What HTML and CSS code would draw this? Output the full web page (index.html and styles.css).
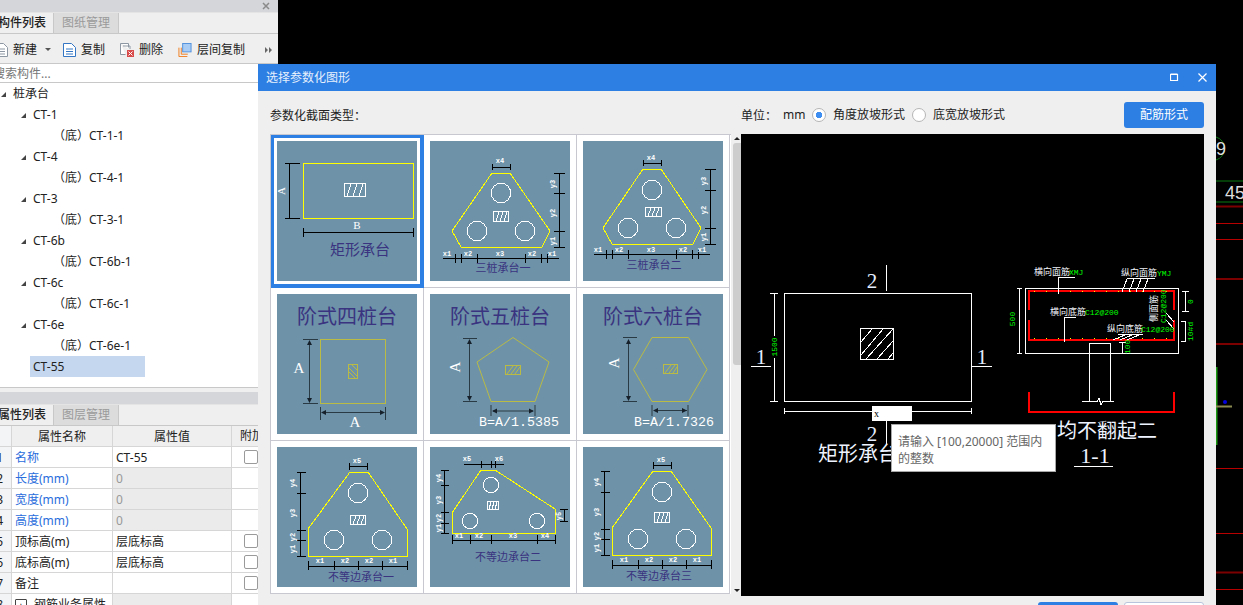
FILE: index.html
```html
<!DOCTYPE html>
<html lang="zh">
<head>
<meta charset="utf-8">
<title>选择参数化图形</title>
<link rel="stylesheet" href="styles.css">
</head>
<body>
<svg class="cad" viewBox="0 0 1243 605" aria-hidden="true">
  <path class="cad-green" d="M1216 137a12 12 0 0 1 0 23M1216 181h27M1216 202h27"/>
  <text class="cad-num" x="1216" y="155">9</text>
  <text class="cad-num-lg" x="1225" y="199">45</text>
  <path class="cad-dark" d="M1216 206.500h27M1216 279h27M1216 344h27M1216 572.500h27"/>
  <path class="cad-red" d="M1216 223.500h27M1216 239.500h27M1216 468.500h27M1216 533.500h27M1216 589.500h27"/>
  <path class="cad-bright" d="M1216.500 367v78"/>
  <path class="cad-olive" d="M1216 406.500h16"/>
  <circle class="cad-dot" cx="1225" cy="402" r="2"/>
</svg>

<aside class="side">
  <div class="grip"><svg class="grip-x" viewBox="0 0 8 8"><path d="M1 1l6 6M7 1l-6 6"/></svg></div>
  <div class="tabs">
    <div class="tab tab-on tab-first">构件列表</div>
    <div class="tab">图纸管理</div>
  </div>
  <div class="tools">
    <div class="tool tool-new">
      <svg class="ico" viewBox="0 0 13 14"><path class="i-grey" d="M.5.500h8l4 4v9h-12zM3 6h7M3 8.500h7M3 11h7"/></svg>
      <span>新建</span><i class="drop"></i>
    </div>
    <div class="tool">
      <svg class="ico" viewBox="0 0 13 14"><path class="i-blue" d="M.5.500h8l4 4v9h-12zM3 6h7M3 8.500h7M3 11h7"/></svg>
      <span>复制</span>
    </div>
    <div class="tool">
      <svg class="ico ico-w" viewBox="0 0 14 14"><path class="i-grey" d="M.5.500h8v4M.5.500v11h5M3 3h7v3"/><rect class="i-red" x="7" y="7" width="7" height="7"/><path class="i-cross" d="M8.500 8.500l4 4M12.500 8.500l-4 4"/></svg>
      <span>删除</span>
    </div>
    <div class="tool">
      <svg class="ico ico-w" viewBox="0 0 14 15"><path class="i-orange" d="M.5 5v9.500h9M3 5v7h7"/><rect class="i-sky" x="4.500" y=".5" width="9" height="9"/></svg>
      <span>层间复制</span>
    </div>
    <svg class="more" viewBox="0 0 8 6"><path d="M0 0l3 3-3 3zM4 0l3 3-3 3z"/></svg>
  </div>
  <div class="search"><span>搜索构件...</span></div>
  <div class="tree">
    <div class="node"><i class="caret"></i>桩承台</div>
    <div class="node node-2"><i class="caret"></i>CT-1</div>
    <div class="leaf">（底）CT-1-1</div>
    <div class="node node-2"><i class="caret"></i>CT-4</div>
    <div class="leaf">（底）CT-4-1</div>
    <div class="node node-2"><i class="caret"></i>CT-3</div>
    <div class="leaf">（底）CT-3-1</div>
    <div class="node node-2"><i class="caret"></i>CT-6b</div>
    <div class="leaf">（底）CT-6b-1</div>
    <div class="node node-2"><i class="caret"></i>CT-6c</div>
    <div class="leaf">（底）CT-6c-1</div>
    <div class="node node-2"><i class="caret"></i>CT-6e</div>
    <div class="leaf">（底）CT-6e-1</div>
    <div class="picked">CT-55</div>
  </div>
  <div class="gap"></div>
  <div class="grip grip-plain"></div>
  <div class="tabs">
    <div class="tab tab-on tab-first">属性列表</div>
    <div class="tab">图层管理</div>
  </div>
  <div class="props">
    <div class="row row-head"><div class="c-no"></div><div class="c">属性名称</div><div class="c">属性值</div><div class="c c-add">附加</div></div>
    <div class="row"><div class="c-no">1</div><div class="c c-name link">名称</div><div class="c c-val">CT-55</div><div class="c c-add"><i class="chk"></i></div></div>
    <div class="row"><div class="c-no">2</div><div class="c c-name link">长度(mm)</div><div class="c c-val off">0</div><div class="c c-add"></div></div>
    <div class="row"><div class="c-no">3</div><div class="c c-name link">宽度(mm)</div><div class="c c-val off">0</div><div class="c c-add"></div></div>
    <div class="row"><div class="c-no">4</div><div class="c c-name link">高度(mm)</div><div class="c c-val off">0</div><div class="c c-add"></div></div>
    <div class="row"><div class="c-no">5</div><div class="c c-name">顶标高(m)</div><div class="c c-val">层底标高</div><div class="c c-add"><i class="chk"></i></div></div>
    <div class="row"><div class="c-no">6</div><div class="c c-name">底标高(m)</div><div class="c c-val">层底标高</div><div class="c c-add"><i class="chk"></i></div></div>
    <div class="row"><div class="c-no">7</div><div class="c c-name">备注</div><div class="c c-val"></div><div class="c c-add"><i class="chk"></i></div></div>
    <div class="row"><div class="c-no">8</div><div class="c c-name"><i class="plus">+</i>钢筋业务属性</div><div class="c c-val off"></div><div class="c c-add"></div></div>
  </div>
</aside>

<section class="dialog">
  <header class="dlg-title">
    <span>选择参数化图形</span>
    <div class="dlg-ctrl">
      <svg class="ctl" viewBox="0 0 9 9"><path d="M.5 1.500h7v6h-7zM.5 1h7"/></svg>
      <svg class="ctl" viewBox="0 0 9 9"><path d="M.5.500l8 8M8.500.500l-8 8"/></svg>
    </div>
  </header>
  <div class="dlg-body">
    <div class="opts">
      <div>参数化截面类型<span class="colon">：</span></div>
      <div class="opts-r">
        <span class="unit">单位<span class="colon">：</span></span><span class="mm">mm</span>
        <i class="radio radio-on"></i><span>角度放坡形式</span>
        <i class="radio"></i><span>底宽放坡形式</span>
        <button class="btn btn-main btn-rebar">配筋形式</button>
      </div>
    </div>
    <div class="main">
      <div class="gallery">
        <div class="cell cell-on">
          <svg class="thumb" viewBox="0 0 140 140">
            <rect class="yl" x="26.500" y="22.500" width="110" height="55"/>
            <path class="bk" d="M12.500 22v55M8 22.500h15M8 77.500h15M26.500 91.500h110M26.500 87v9M136.500 87v9"/>
            <rect class="wh" x="67.500" y="42.500" width="21" height="13"/><path class="wh" d="M70 55l4-12M76 55l4-12M82 55l4-12"/>
            <text class="lab-lg" x="8" y="50" transform="rotate(-90 8 50)">A</text>
            <text class="lab-lg" x="80" y="88">B</text>
            <text class="cap cap-lg" x="83" y="114">矩形承台</text>
          </svg>
        </div>
        <div class="cell">
          <svg class="thumb" viewBox="0 0 140 140">
            <polygon class="yl" points="62,32 80,32 120,90 112,106 31,106 22,90"/>
            <circle class="wh" cx="71" cy="52" r="9.700"/><circle class="wh" cx="47" cy="90" r="9.700"/><circle class="wh" cx="95" cy="90" r="9.700"/>
            <rect class="wh" x="63.500" y="70.500" width="15" height="10"/><path class="wh" d="M66 80l3-9M70 80l3-9M74 80l3-9"/>
            <path class="bk" d="M62.500 26h18M62.500 23v6M80.500 23v6M129.500 32v74M124 32.500h11M124 52.500h11M124 90.500h11M124 106.500h11M13 117.500h116M25.500 113v9M31.500 113v9M47.500 113v9M95.500 113v9M111.500 113v9M117.500 113v9"/>
            <text class="lab" x="70" y="22">x4</text><text class="lab" x="17" y="115">x1</text><text class="lab" x="38" y="115">x2</text><text class="lab" x="70" y="115">x3</text><text class="lab" x="102" y="115">x2</text><text class="lab" x="122" y="115">x1</text>
            <text class="lab" x="125" y="43" transform="rotate(-90 125 43)">y3</text><text class="lab" x="125" y="72" transform="rotate(-90 125 72)">y2</text><text class="lab" x="125" y="100" transform="rotate(-90 125 100)">y1</text>
            <text class="cap" x="73" y="131">三桩承台一</text>
          </svg>
        </div>
        <div class="cell">
          <svg class="thumb" viewBox="0 0 140 140">
            <polygon class="yl" points="60,28 78,28 118,87 110,103 29,103 20,87"/>
            <circle class="wh" cx="69" cy="49" r="9.700"/><circle class="wh" cx="45" cy="87" r="9.700"/><circle class="wh" cx="93" cy="87" r="9.700"/>
            <rect class="wh" x="62.500" y="66.500" width="16" height="9"/><path class="wh" d="M65 75l3-8M69 75l3-8M73 75l3-8"/>
            <path class="bk" d="M60.500 22h18M60.500 19v6M78.500 19v6M127.500 28v75M122 28.500h11M122 49.500h11M122 87.500h11M122 103.500h11M11 113.500h116M23.500 109v9M29.500 109v9M45.500 109v9M93.500 109v9M109.500 109v9M115.500 109v9"/>
            <text class="lab" x="68" y="19">x4</text><text class="lab" x="15" y="111">x1</text><text class="lab" x="36" y="111">x2</text><text class="lab" x="68" y="111">x3</text><text class="lab" x="100" y="111">x2</text><text class="lab" x="119" y="111">x1</text>
            <text class="lab" x="123" y="40" transform="rotate(-90 123 40)">y3</text><text class="lab" x="123" y="69" transform="rotate(-90 123 69)">y2</text><text class="lab" x="123" y="96" transform="rotate(-90 123 96)">y1</text>
            <text class="cap" x="71" y="128">三桩承台二</text>
          </svg>
        </div>
        <div class="cell">
          <svg class="thumb" viewBox="0 0 140 140">
            <text class="cap cap-xl" x="70" y="30">阶式四桩台</text>
            <rect class="ol" x="43.500" y="45.500" width="65" height="64"/>
            <rect class="ol" x="71.500" y="70.500" width="9" height="14"/><path class="ol" d="M72 74l8 8M72 78l6 6M75 71l5 5"/>
            <path class="dm" d="M32.500 47v60M26 45.500h15M26 109.500h15M46 118.500h60M43.500 113v13M108.500 113v13"/>
            <path class="ar" d="M32.500 46l-2.500 5h5zM32.500 109l-2.500-5h5zM44 118.500l5-2.500v5zM108 118.500l-5-2.500v5z"/>
            <text class="lab-xl" x="22" y="79">A</text><text class="lab-xl" x="78" y="133">A</text>
          </svg>
        </div>
        <div class="cell">
          <svg class="thumb" viewBox="0 0 140 140">
            <text class="cap cap-xl" x="70" y="30">阶式五桩台</text>
            <polygon class="ol" points="83,43.500 119,68 105,107.500 61,107.500 47,68"/>
            <rect class="ol" x="75.500" y="71.500" width="15" height="9"/><path class="ol" d="M77 80l6-8M81 80l6-8M85 80l5-7"/>
            <path class="dm" d="M39.500 46v60M33 44.500h14M33 107.500h14M63 117h40M61 111v11M105 111v11"/>
            <path class="ar" d="M39.500 45l-2.500 5h5zM39.500 107l-2.500-5h5zM62 117l5-2.500v5zM104 117l-5-2.500v5z"/>
            <text class="lab-xl" x="30" y="73" transform="rotate(-90 30 73)">A</text>
            <text class="lab-eq" x="89" y="132">B=A/1.5385</text>
          </svg>
        </div>
        <div class="cell">
          <svg class="thumb" viewBox="0 0 140 140">
            <text class="cap cap-xl" x="70" y="30">阶式六桩台</text>
            <polygon class="ol" points="69,43.500 105.500,43.500 124,75.500 105.500,107.500 69,107.500 50.500,75.500"/>
            <rect class="ol" x="80.500" y="70.500" width="14" height="9"/><path class="ol" d="M82 79l6-8M86 79l6-8M90 79l4-6"/>
            <path class="dm" d="M45.500 46v60M40 43.500h14M40 107.500h14M71 116.500h33M69 111v11M105 111v11"/>
            <path class="ar" d="M45.500 45l-2.500 5h5zM45.500 107l-2.500-5h5zM70 116.500l5-2.500v5zM104 116.500l-5-2.500v5z"/>
            <text class="lab-xl" x="36" y="69" transform="rotate(-90 36 69)">A</text>
            <text class="lab-eq" x="91" y="132">B=A/1.7326</text>
          </svg>
        </div>
        <div class="cell">
          <svg class="thumb" viewBox="0 0 140 140">
            <polygon class="yl" points="73,25 91,25 130,82 130,109 31,109 31,82"/>
            <circle class="wh" cx="81" cy="46" r="9.700"/><circle class="wh" cx="57" cy="93" r="9.700"/><circle class="wh" cx="105" cy="93" r="9.700"/>
            <rect class="wh" x="73.500" y="68.500" width="15" height="9"/><path class="wh" d="M76 77l3-8M80 77l3-8M84 77l3-8"/>
            <path class="bk" d="M73 19.500h18M72.500 16v7M90.500 16v7M23.500 25v84M20 25.500h9M20 46.500h9M20 83.500h9M20 93.500h9M20 109.500h9M31 119.500h99M31.500 114v9M57.500 114v9M81.500 114v9M105.500 114v9M130.500 114v9"/>
            <text class="lab" x="80" y="16">x5</text><text class="lab" x="43" y="116">x1</text><text class="lab" x="68" y="116">x2</text><text class="lab" x="92" y="116">x2</text><text class="lab" x="116" y="116">x1</text>
            <text class="lab" x="18" y="36" transform="rotate(-90 18 36)">y4</text><text class="lab" x="18" y="66" transform="rotate(-90 18 66)">y3</text><text class="lab" x="18" y="90" transform="rotate(-90 18 90)">y2</text><text class="lab" x="18" y="102" transform="rotate(-90 18 102)">y1</text>
            <text class="cap" x="84" y="134">不等边承台一</text>
          </svg>
        </div>
        <div class="cell">
          <svg class="thumb" viewBox="0 0 140 140">
            <polygon class="yl" points="51,23 65,23 125,62 125,86 22,86 22,66"/>
            <circle class="wh" cx="61" cy="38" r="7.700"/><circle class="wh" cx="40" cy="74" r="7.700"/><circle class="wh" cx="107" cy="74" r="7.700"/>
            <rect class="wh" x="57.500" y="54.500" width="11" height="8"/><path class="wh" d="M59 62l2-7M62 62l2-7M65 62l2-7"/>
            <path class="bk" d="M34 17.500h40M51.500 14v7M61.500 14v7M65.500 14v7M14.500 23v63M11 23.500h8M11 38.500h8M11 65.500h8M11 76.500h8M11 86.500h8M134.500 62v13M130 62.500h8M130 74.500h8M22 93.500h103M22.500 88v9M40.500 88v9M61.500 88v9M107.500 88v9M125.500 88v9"/>
            <text class="lab" x="37" y="14">x5</text><text class="lab" x="69" y="14">x6</text><text class="lab" x="29" y="91">x1</text><text class="lab" x="49" y="91">x2</text><text class="lab" x="83" y="91">x3</text><text class="lab" x="115" y="91">x4</text>
            <text class="lab" x="11" y="31" transform="rotate(-90 11 31)">y4</text><text class="lab" x="11" y="53" transform="rotate(-90 11 53)">y3</text><text class="lab" x="11" y="71" transform="rotate(-90 11 71)">y2</text><text class="lab" x="11" y="81" transform="rotate(-90 11 81)">y1</text><text class="lab" x="131" y="69" transform="rotate(-90 131 69)">y5</text>
            <text class="cap" x="78" y="114">不等边承台二</text>
          </svg>
        </div>
        <div class="cell">
          <svg class="thumb" viewBox="0 0 140 140">
            <polygon class="yl" points="70,24 88,24 128,81 128,108 29,108 29,81"/>
            <circle class="wh" cx="79" cy="45" r="9.700"/><circle class="wh" cx="55" cy="92" r="9.700"/><circle class="wh" cx="103" cy="92" r="9.700"/>
            <rect class="wh" x="71.500" y="65.500" width="15" height="10"/><path class="wh" d="M74 75l3-9M78 75l3-9M82 75l3-9"/>
            <path class="bk" d="M70 18.500h18M70.500 15v7M88.500 15v7M21.500 24v84M18 24.500h9M18 45.500h9M18 82.500h9M18 92.500h9M18 108.500h9M29 118.500h99M29.500 113v9M55.500 113v9M79.500 113v9M103.500 113v9M128.500 113v9"/>
            <text class="lab" x="78" y="15">x5</text><text class="lab" x="41" y="115">x1</text><text class="lab" x="66" y="115">x2</text><text class="lab" x="90" y="115">x2</text><text class="lab" x="114" y="115">x1</text>
            <text class="lab" x="16" y="35" transform="rotate(-90 16 35)">y4</text><text class="lab" x="16" y="65" transform="rotate(-90 16 65)">y3</text><text class="lab" x="16" y="89" transform="rotate(-90 16 89)">y2</text><text class="lab" x="16" y="101" transform="rotate(-90 16 101)">y1</text>
            <text class="cap" x="76" y="133">不等边承台三</text>
          </svg>
        </div>
      </div>
      <div class="scroll"><i class="sc-up"></i><div class="sc-thumb"></div><i class="sc-down"></i></div>
      <svg class="preview" viewBox="741 134 463 462">
        <rect class="wh" x="784.500" y="293.500" width="187" height="108"/>
        <rect class="wh" x="860.500" y="328.500" width="33" height="31"/>
        <path class="wh" d="M861 342l11-13M861 355l22-26M866 359l27-30M877 359l16-18M888 359l5-6"/>
        <path class="wh" d="M886.500 265v26M886.500 421v23M751 366.500h20M972 366.500h20M774.500 293v43M774.500 358v44M770 293.500h8M770 401.500h8M784 411.500h188M784.500 408v6M971.500 408v6"/>
        <text class="big" x="872" y="288">2</text><text class="big" x="761" y="364">1</text><text class="big" x="982" y="364">1</text><text class="big" x="872" y="441">2</text>
        <text class="gr gr-v" x="777" y="347" transform="rotate(-90 777 347)">1500</text>
        <rect class="bx" x="872" y="406" width="40" height="15"/>
        <text class="bx-t" x="874" y="417">x</text>
        <text class="ttl" x="818" y="461">矩形承台</text>
        <text class="ttl" x="1057" y="438">均不翻起二</text>
        <text class="sec" x="1095" y="463">1-1</text>
        <path class="wh" d="M1074 466.500h39"/>

        <rect class="wh" x="1025.500" y="288.500" width="153" height="65"/>
        <path class="rd" d="M1029 310v-19h145v19M1029 320v20h145v-20M1029 392v20h145v-20"/>
        <path class="dots" d="M1034 291.500h136M1034 338.500h136"/>
        <path class="wh" d="M1089.500 401v-57.500h21v57.500M1082 401.500h15l2-3 2 6 2-3h11"/>
        <path class="wh" d="M1019.500 288v65M1017 288.500h5M1017 353.500h5M1058.500 294v-16.500h16M1127 278.500h28M1127 279l-5 13M1134 279l-5 13M1141 279l-5 13M1148 279l-5 13M1076 317.500h-12v24M1118 334.500h25M1125 335l-12 5M1132 335l-12 5M1139 335l-12 5M1166 313l8 9M1166 320l8 9M1185.500 292v20M1182 291.500h7M1182 311.500h7M1181 321.500h4v20h-4M1122.500 342v12M1119 342.500h7M1119 353.500h7"/>
        <text class="lb" x="1034" y="275">横向面筋</text><text class="gr" x="1069" y="275">XMJ</text>
        <text class="lb" x="1121" y="276">纵向面筋</text><text class="gr" x="1157" y="276">YMJ</text>
        <text class="lb" x="1050" y="315">横向底筋</text><text class="gr" x="1085" y="315">C12@200</text>
        <text class="lb" x="1107" y="332">纵向底筋</text><text class="gr" x="1141" y="332">C12@200</text>
        <text class="lb" x="1157" y="322" transform="rotate(-90 1157 322)">侧面筋</text>
        <text class="gr" x="1166" y="323" transform="rotate(-90 1166 323)">C12@200</text>
        <text class="gr gr-v" x="1015" y="319" transform="rotate(-90 1015 319)">500</text>
        <text class="gr" x="1193" y="304" transform="rotate(-90 1193 304)">0</text>
        <text class="gr" x="1193" y="341" transform="rotate(-90 1193 341)">10#d</text>
        <text class="gr" x="1130" y="354" transform="rotate(-90 1130 354)">100</text>
      </svg>
    </div>
    <div class="foot">
      <button class="btn btn-main">确定</button>
      <button class="btn btn-alt">取消</button>
    </div>
  </div>
</section>

<div class="tip">请输入 [100,20000] 范围内<br>的整数</div>
</body>
</html>
```

FILE: styles.css
```css
* { box-sizing: border-box; }
html, body { margin: 0; height: 100%; }
body {
  position: relative;
  width: 1243px;
  height: 605px;
  overflow: hidden;
  background: #000;
  color: #222;
  font: 12px/1 "Noto Sans", "Noto Sans CJK SC", sans-serif;
}
i { font-style: normal; display: block; }
.colon { font-family: "Noto Sans CJK TC", sans-serif; }

/* CAD backdrop */
.cad { position: absolute; left: 0; top: 0; width: 1243px; height: 605px; }
.cad path { fill: none; }
.cad-green { stroke: #0a7a12; }
.cad-dark { stroke: #7c0000; stroke-width: 2; }
.cad-red { stroke: #b80000; }
.cad-bright { stroke: #1c9a14; stroke-width: 2; }
.cad-olive { stroke: #8a8a50; stroke-width: 2; }
.cad-dot { fill: #0000e0; }
.cad-num { fill: #ddd; font: 18px "Liberation Sans", sans-serif; }
.cad-num-lg { fill: #ddd; font: 18px "Liberation Sans", sans-serif; }

/* left panel */
.side {
  position: absolute;
  left: 0; top: 0;
  width: 278px;
  height: 605px;
  overflow: hidden;
  background: #efefef;
}
.grip { height: 12px; background: #d5d6da; display: flex; justify-content: flex-end; align-items: center; padding-right: 8px; }
.grip-plain { height: 12px; }
.grip-x { width: 8px; height: 8px; }
.grip-x path { stroke: #8a8a8a; stroke-width: 1.500; fill: none; }
.tabs { display: flex; height: 22px; border-top: 1px solid #e4e4e4; border-bottom: 1px solid #c8c8c8; background: #efefef; }
.tab { width: 65px; display: flex; align-items: center; justify-content: center; font-size: 12px; color: #9a9a9a; background: #dcdcdc; border-right: 1px solid #c8c8c8; }
.tab-on { color: #222; background: #efefef; font-weight: 500; }
.tab-first { width: 54px; justify-content: flex-end; padding-right: 7px; white-space: nowrap; overflow: hidden; }
.tools { height: 30px; display: flex; align-items: center; margin-left: -5px; padding: 2px 5px 0 0; border-bottom: 1px solid #c8c8c8; }
.tool { display: flex; align-items: center; gap: 5px; margin-right: 15px; }
.tool-new { margin-right: 12px; }
.ico { width: 13px; height: 14px; fill: none; }
.ico-w { width: 14px; }
.i-grey { stroke: #8d97a3; fill: #fff; }
.i-blue { stroke: #3476c4; fill: #fff; }
.i-red { fill: #d84a4a; }
.i-cross { stroke: #fff; }
.i-orange { stroke: #f07a1a; stroke-width: 1; fill: none; }
.i-sky { fill: #a8ccf4; stroke: #4f8fdc; }
.drop { width: 0; height: 0; border: 3px solid transparent; border-top: 3px solid #555; border-bottom: 0; margin-left: 3px; }
.more { width: 8px; height: 6px; margin-left: auto; fill: #666; }
.search { height: 19px; padding-top: 2px; background: #fff; border-bottom: 1px solid #c8c8c8; display: flex; align-items: center; color: #777; overflow: hidden; }
.search span { margin-left: -7px; white-space: nowrap; }
.tree { height: 305px; background: #fff; border-bottom: 1px solid #c8c8c8; }
.node, .leaf, .picked { height: 21px; padding-top: 1px; display: flex; align-items: center; white-space: nowrap; }
.node { padding-left: 1px; gap: 7px; }
.node-2 { padding-left: 21px; }
.leaf { padding-left: 53px; }
.picked { margin-left: 30px; width: 115px; padding-left: 3px; background: #c5d7ee; }
.caret { width: 0; height: 0; border-left: 5px solid transparent; border-bottom: 5px solid #444; }
.gap { height: 4px; background: #efefef; }
.props { background: #fff; }
.row { display: grid; grid-template-columns: 12px 101px 119px 46px; height: 21px; border-bottom: 1px solid #d6d6d6; }
.row-head { background: #efefef; }
.row-head .c { justify-content: center; }
.row-head .c-add { justify-content: flex-start; padding-left: 8px; white-space: nowrap; overflow: hidden; }
.c-no { background: #f3f4f6; border-right: 1px solid #d6d6d6; display: flex; align-items: center; justify-content: flex-end; padding: 2px 8px 0 0; overflow: hidden; }
.c { display: flex; align-items: center; padding-top: 2px; border-right: 1px solid #d6d6d6; white-space: nowrap; }
.c-name { padding-left: 3px; }
.link { color: #2a6ddc; }
.c-val { padding-left: 3px; }
.off { background: #ebebeb; color: #999; }
.c-add { border-right: 0; padding-left: 12px; }
.row .c-add { padding-top: 0; }
.chk { width: 14px; height: 14px; border: 1px solid #9a9a9a; border-radius: 2px; background: #fff; }
.plus { width: 12px; height: 12px; border: 1px solid #444; border-radius: 1px; margin-right: 7px; display: flex; align-items: center; justify-content: center; font-size: 11px; }

/* dialog */
.dialog { position: absolute; left: 258px; top: 64px; width: 958px; height: 541px; overflow: hidden; background: #efefef; }
.dlg-title { height: 27px; background: #2e7fe3; color: #e6f0fc; display: flex; align-items: center; justify-content: space-between; padding: 0 9px 0 8px; }
.dlg-ctrl { display: flex; gap: 19px; align-items: center; }
.ctl { width: 9px; height: 9px; fill: none; stroke: #fff; stroke-width: 1.200; }
.dlg-body { padding: 0 12px; }
.opts { height: 43px; padding-top: 5px; display: grid; grid-template-columns: 471px 1fr; align-items: center; }
.opts-r { display: flex; align-items: center; }
.unit { width: 42px; }
.mm { width: 29px; }
.radio { width: 14px; height: 14px; border-radius: 50%; border: 1px solid #b5b5b5; background: #fff; margin: -1px 7px 0 0; }
.radio + span + .radio { margin-left: 7px; }
.radio-on { background: radial-gradient(circle, #3d8ef0 0 3px, #fff 3.500px); }
.btn { width: 80px; height: 26px; border-radius: 3px; border: 0; font: inherit; }
.btn-main { background: #2e7fe3; color: #fff; }
.btn-alt { background: #fff; color: #222; border: 1px solid #b8c4dc; }
.btn-rebar { margin-left: auto; }
.main { display: flex; height: 462px; }
.gallery { width: 461px; height: 460px; display: grid; grid-template-columns: repeat(3, 153px); grid-auto-rows: 153px; border-top: 1px solid #c8c8d0; border-left: 1px solid #c8c8d0; background: #fff; }
.cell { padding: 6px; border-right: 1px solid #c8c8d0; border-bottom: 1px solid #c8c8d0; }
.cell-on { box-shadow: inset 0 0 0 3px #2e7fe3; border-color: #2e7fe3; }
.thumb { display: block; width: 140px; height: 140px; background: #6e92a8; }
.scroll { width: 10px; display: flex; flex-direction: column; align-items: flex-end; padding-top: 3px; padding-bottom: 4px; }
.sc-up, .sc-down { width: 0; height: 0; margin-right: 1px; border: 3px solid transparent; }
.sc-up { border-top: 0; border-bottom: 3px solid #222; }
.sc-down { border-bottom: 0; border-top: 3px solid #222; margin-top: auto; }
.sc-thumb { width: 8px; height: 222px; margin-top: 3px; background: #cdcdcd; border-radius: 3px 0 0 3px; }
.preview { display: block; width: 463px; height: 462px; background: #000; }
.foot { display: flex; justify-content: flex-end; gap: 6px; padding-top: 6px; }

/* svg drawing */
.yl, .wh, .bk, .rd, .bx { shape-rendering: crispEdges; }
.yl { fill: none; stroke: #ff0; }
.wh { fill: none; stroke: #fff; }
.bk { fill: none; stroke: #000; }
.ol { fill: none; stroke: #b9bb45; }
.dm { fill: none; stroke: #2a3a44; }
.ar { fill: #15202a; }
.lab { fill: #fff; font: bold 7px "Liberation Mono", monospace; text-anchor: middle; }
.lab-lg { fill: #fff; font: 11px "Liberation Serif", serif; text-anchor: middle; }
.lab-xl { fill: #fff; font: 15px "Liberation Serif", serif; text-anchor: middle; }
.lab-eq { fill: #fff; font: 13.300px "Liberation Mono", monospace; text-anchor: middle; }
.cap { fill: #3a3480; font: 11px "Noto Sans CJK SC", sans-serif; text-anchor: middle; }
.cap-lg { font-size: 15px; }
.cap-xl { font-size: 20px; }
.big { fill: #e4eeff; font: 21px "Liberation Serif", serif; text-anchor: middle; }
.gr { fill: #0f0; font: 8px "Liberation Mono", monospace; }
.gr-v { text-anchor: middle; }
.lb { fill: #eef2f8; font: 9px "Noto Sans CJK SC", sans-serif; }
.bx { fill: #fff; }
.bx-t { fill: #000; font: 10px "Liberation Serif", serif; }
.ttl { fill: #eef4ff; font: 20px "Noto Sans CJK SC", sans-serif; }
.sec { fill: #eef4ff; font: 22px "Liberation Serif", serif; text-anchor: middle; }
.rd { fill: none; stroke: #f00; stroke-width: 2; }
.dots { fill: none; stroke: #ff0; stroke-width: 1; stroke-dasharray: 1 11; }

/* tooltip */
.tip {
  position: absolute;
  left: 891px; top: 424px;
  width: 165px; height: 48px;
  padding: 8px 6px;
  background: #fff;
  border: 1px solid #a8a8a8;
  color: #666;
  line-height: 17px;
  white-space: nowrap;
}
```
